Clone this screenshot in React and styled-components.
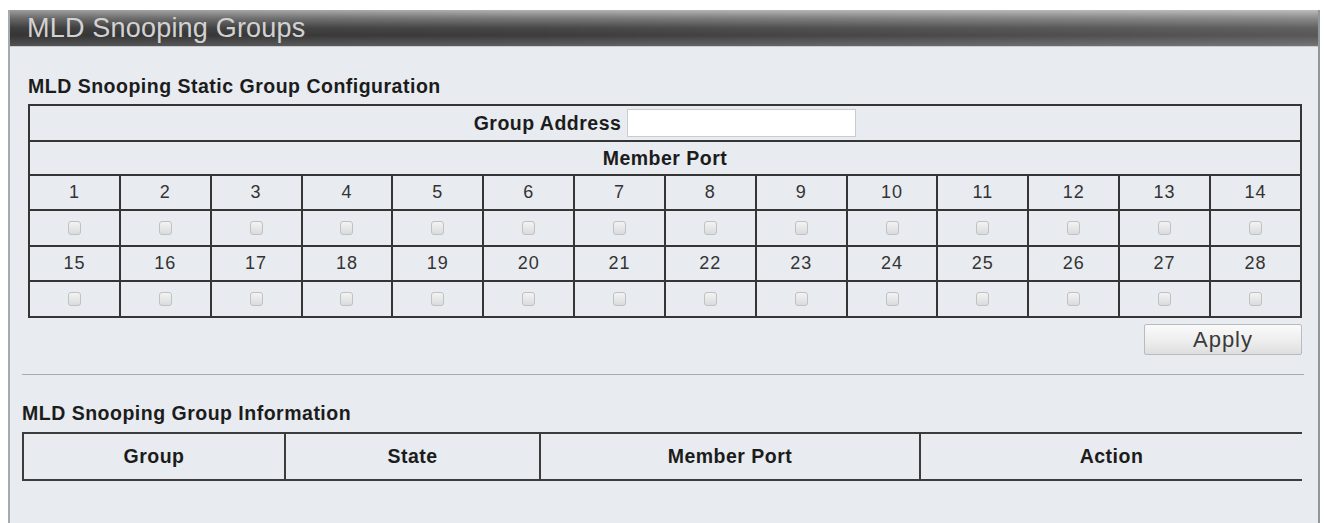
import React from 'react'
import styled, { createGlobalStyle } from 'styled-components'

const GlobalStyle = createGlobalStyle`
  html, body {
    margin: 0;
    padding: 0;
    background: #ffffff;
  }
  body {
    font-family: "Liberation Sans", Arial, sans-serif;
  }
`

const Panel = styled.div`
  margin: 10px 4px 0 8px;
  height: 513px;
  box-sizing: border-box;
  border-left: 2px solid #a3abb2;
  border-right: 2px solid #8e979e;
  background: #e8ebef;
  display: flex;
  flex-direction: column;
`

const TitleBar = styled.div`
  height: 36px;
  display: flex;
  align-items: center;
  padding-left: 17px;
  font-size: 27px;
  color: #d2d2d2;
  letter-spacing: 0.2px;
  background:
    linear-gradient(90deg, rgba(0, 0, 0, 0.12) 0%, rgba(255, 255, 255, 0) 40%, rgba(255, 255, 255, 0.14) 100%),
    linear-gradient(180deg, #b2b2b2 0%, #7a7a7a 22%, #474747 50%, #3c3c3c 70%, #5e5e5e 100%);
  border-bottom: 1px solid #c8cdd2;
`

const Section = styled.div`
  padding: ${p => p.$pad};
`

const boldText = `
  font-family: "Liberation Sans", Arial, sans-serif;
  font-weight: bold;
  font-size: 19.5px;
  letter-spacing: 0.5px;
  color: #1c1c1c;
`

const Heading = styled.div`
  ${boldText}
  line-height: 20px;
  margin-bottom: ${p => p.$gap}px;
`

const Grid = styled.table`
  width: 100%;
  border-collapse: collapse;
  table-layout: fixed;

  td {
    border: 2px solid #353535;
    text-align: center;
    padding: 0;
    color: #333;
  }
`

const WideCell = styled.td`
  height: ${p => p.$h}px;
  ${boldText}
  color: #1c1c1c !important;
`

const AddressWrap = styled.div`
  display: flex;
  align-items: center;
  justify-content: center;
  gap: 6px;
`

const AddressInput = styled.input`
  width: 229px;
  height: 28px;
  box-sizing: border-box;
  border: 1px solid #c8ccd0;
  background: #ffffff;
  outline: none;
`

const NumCell = styled.td`
  height: 33px;
  font-size: 18px;
  letter-spacing: 1px;
`

const BoxCell = styled.td`
  height: 34px;
`

const Check = styled.input.attrs({ type: 'checkbox', disabled: true })`
  appearance: none;
  -webkit-appearance: none;
  margin: 4px 0 0;
  width: 13px;
  height: 14px;
  border: 1px solid #bfc1c3;
  border-radius: 3px;
  background: linear-gradient(180deg, #f3f3f3 0%, #dadbdd 100%);
`

const ButtonRow = styled.div`
  display: flex;
  justify-content: flex-end;
  margin-top: 6px;
`

const Button = styled.button`
  width: 158px;
  height: 31px;
  border: 1px solid #b9bcbf;
  border-radius: 2px;
  background: linear-gradient(180deg, #fafafa 0%, #ececec 60%, #dedede 100%);
  font-family: "Liberation Sans", Arial, sans-serif;
  font-size: 22px;
  letter-spacing: 1px;
  color: #3a3a3a;
  padding: 0;
  text-align: center;
  line-height: 29px;
`

const Divider = styled.hr`
  border: none;
  border-top: 1px solid #a9adb1;
  margin: 19px 14px 0 12px;
`

const InfoTable = styled.table`
  width: 100%;
  border-collapse: collapse;
  table-layout: fixed;

  th {
    height: 45px;
    border-top: 2px solid #3c3c3c;
    border-bottom: 2px solid #3c3c3c;
    border-left: 2px solid #3c3c3c;
    ${boldText}
    padding: 0;
  }
`

const rows = [
  Array.from({ length: 14 }, (_, i) => i + 1),
  Array.from({ length: 14 }, (_, i) => i + 15),
]

export default function App() {
  return (
    <>
      <GlobalStyle />
      <Panel>
        <TitleBar>MLD Snooping Groups</TitleBar>
        <Section $pad="29px 16px 0 18px">
          <Heading $gap={8}>MLD Snooping Static Group Configuration</Heading>
          <Grid>
            <tbody>
              <tr>
                <WideCell colSpan={14} $h={34}>
                  <AddressWrap>
                    <span>Group Address</span>
                    <AddressInput type="text" />
                  </AddressWrap>
                </WideCell>
              </tr>
              <tr>
                <WideCell colSpan={14} $h={32}>Member Port</WideCell>
              </tr>
              {rows.map((r, ri) => (
                <React.Fragment key={ri}>
                  <tr>
                    {r.map(n => <NumCell key={n}>{n}</NumCell>)}
                  </tr>
                  <tr>
                    {r.map(n => (
                      <BoxCell key={n}><Check /></BoxCell>
                    ))}
                  </tr>
                </React.Fragment>
              ))}
            </tbody>
          </Grid>
          <ButtonRow>
            <Button>Apply</Button>
          </ButtonRow>
        </Section>
        <Divider />
        <Section $pad="28px 16px 0 12px">
          <Heading $gap={9}>MLD Snooping Group Information</Heading>
          <InfoTable>
            <colgroup>
              <col style={{ width: '262px' }} />
              <col style={{ width: '255px' }} />
              <col style={{ width: '380px' }} />
              <col />
            </colgroup>
            <thead>
              <tr>
                <th>Group</th>
                <th>State</th>
                <th>Member Port</th>
                <th>Action</th>
              </tr>
            </thead>
          </InfoTable>
        </Section>
      </Panel>
    </>
  )
}
